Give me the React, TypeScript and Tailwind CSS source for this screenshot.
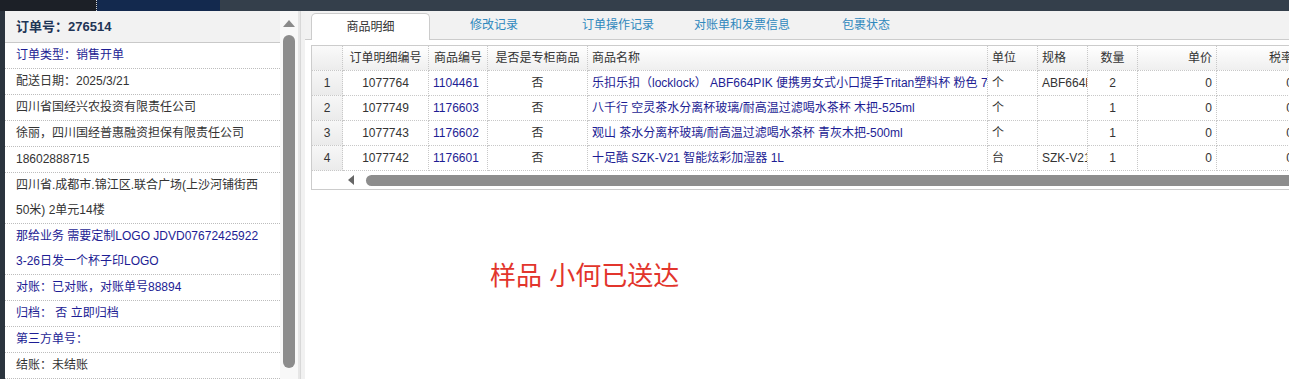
import React from "react";

const font = { fontFamily: '"Liberation Sans", "Noto Sans CJK SC", sans-serif' };

type InfoRow = { lines: string[]; blue?: boolean };

const infoRows: InfoRow[] = [
  { lines: ["订单类型：销售开单"], blue: true },
  { lines: ["配送日期：2025/3/21"] },
  { lines: ["四川省国经兴农投资有限责任公司"] },
  { lines: ["徐丽，四川国经普惠融资担保有限责任公司"] },
  { lines: ["18602888715"] },
  { lines: ["四川省.成都市.锦江区.联合广场(上沙河铺街西", "50米) 2单元14楼"] },
  { lines: ["那给业务 需要定制LOGO JDVD07672425922", "3-26日发一个杯子印LOGO"], blue: true },
  { lines: ["对账：已对账，对账单号88894"], blue: true },
  { lines: ["归档： 否 立即归档"], blue: true },
  { lines: ["第三方单号："], blue: true },
  { lines: ["结账：未结账"] },
];

const tabs = ["商品明细", "修改记录", "订单操作记录", "对账单和发票信息", "包裹状态"];

const items = [
  { id: "1077764", code: "1104461", name: "乐扣乐扣（locklock） ABF664PIK 便携男女式小口提手Tritan塑料杯 粉色 700ml", unit: "个", spec: "ABF664PIK", qty: "2" },
  { id: "1077749", code: "1176603", name: "八千行 空灵茶水分离杯玻璃/耐高温过滤喝水茶杯 木把-525ml", unit: "个", spec: "", qty: "1" },
  { id: "1077743", code: "1176602", name: "观山 茶水分离杯玻璃/耐高温过滤喝水茶杯 青灰木把-500ml", unit: "个", spec: "", qty: "1" },
  { id: "1077742", code: "1176601", name: "十足酷 SZK-V21 智能炫彩加湿器 1L", unit: "台", spec: "SZK-V21", qty: "1" },
];

const cols = "grid grid-cols-[31px_86px_59px_100px_400px_50px_50px_50px_79px_81px] w-max";
const cell = "h-[25px] leading-[24px] border-r border-b border-dotted border-[#c8c8c8] px-[4px] overflow-hidden whitespace-nowrap";
const head = `${cell} bg-gradient-to-b from-white to-[#efefef]`;

function LeftPanel() {
  return (
    <div className="w-[275px] bg-white flex flex-col">
      <div className="h-[32px] bg-[#f2f2f2] border-b border-[#c9c9c9] pl-[11px] flex items-center text-[13px] font-bold text-[#1f3556]">
        订单号：276514
      </div>
      {infoRows.map((r, i) => (
        <div
          key={i}
          className={`pl-[11px] border-b border-dotted border-[#bdbdbd] text-[12px] leading-[25px] ${r.blue ? "text-[#1d1d94]" : "text-[#333]"}`}
        >
          {r.lines.map((l, j) => (
            <div key={j} className="whitespace-nowrap">{l}</div>
          ))}
        </div>
      ))}
    </div>
  );
}

function LeftScrollbar() {
  return (
    <div className="w-[18px] bg-[#f8f8f8] flex flex-col items-center pt-[9px]">
      <svg width="12" height="7" viewBox="0 0 12 7">
        <polygon points="6,0 12,7 0,7" fill="#8a8a8a" />
      </svg>
      <div className="mt-[8px] w-[12px] h-[333px] rounded-full bg-[#8c8c8c]" />
    </div>
  );
}

function Table() {
  return (
    <div className="ml-[6px] mt-[5px] border border-[#cccccc] border-r-0 text-[12px] text-[#333]">
      <div className={cols}>
        <div className={`${cell} bg-gradient-to-b from-[#fafafa] to-[#ececec]`} />
        <div className={`${head} text-center`}>订单明细编号</div>
        <div className={`${head} text-center`}>商品编号</div>
        <div className={`${head} text-center`}>是否是专柜商品</div>
        <div className={head}>商品名称</div>
        <div className={head}>单位</div>
        <div className={head}>规格</div>
        <div className={`${head} text-center`}>数量</div>
        <div className={`${head} text-right`}>单价</div>
        <div className={`${head} text-right`}>税率</div>
        {items.map((it, i) => (
          <React.Fragment key={it.id}>
            <div className={`${cell} text-center bg-gradient-to-b from-[#f7f7f7] to-[#ebebeb]`}>{i + 1}</div>
            <div className={`${cell} text-center`}>{it.id}</div>
            <div className={`${cell} text-[#1d1d94]`}>{it.code}</div>
            <div className={`${cell} text-center`}>否</div>
            <div className={`${cell} text-[#1d1d94]`}>{it.name}</div>
            <div className={cell}>{it.unit}</div>
            <div className={cell}>{it.spec}</div>
            <div className={`${cell} text-center`}>{it.qty}</div>
            <div className={`${cell} text-right`}>0</div>
            <div className={`${cell} text-right`}>0</div>
          </React.Fragment>
        ))}
      </div>
      <div className="h-[18px] flex items-center">
        <div className="w-[44px] flex justify-end pr-[2px]">
          <svg width="6" height="10" viewBox="0 0 6 10">
            <polygon points="0,5 6,0 6,10" fill="#666" />
          </svg>
        </div>
        <div className="ml-[10px] flex-1 h-[11px] rounded-l-full bg-[#8d8d8d]" />
      </div>
    </div>
  );
}

function RightPanel() {
  return (
    <div className="flex-1 min-w-0 bg-white overflow-hidden flex flex-col">
      <div className="h-[29px] bg-[#f2f2f2] border-b border-[#cccccc] flex items-end pl-[3px] text-[12px]">
        {tabs.map((t, i) =>
          i === 0 ? (
            <div key={t} className="w-[124px] pl-[3px] pr-[2px] -mb-px">
              <div className="h-[27px] bg-white border border-b-0 border-[#cccccc] rounded-t-[5px] flex items-center justify-center text-[#333]">
                {t}
              </div>
            </div>
          ) : (
            <div key={t} className="w-[124px] h-[28px] flex items-center justify-center text-[#2f88bd]">
              {t}
            </div>
          )
        )}
      </div>
      <Table />
      <div className="pl-[185px] pt-[71px] text-[26px] leading-[30px] text-[#e2352c] whitespace-nowrap">
        样品 小何已送达
      </div>
    </div>
  );
}

export default function App() {
  return (
    <div className="w-[1289px] h-[379px] overflow-hidden flex flex-col bg-white" style={font}>
      <div className="h-[11px] flex shrink-0">
        <div className="w-[97px] bg-[#1c2027] border-r border-dotted border-[#cfd6df]" />
        <div className="w-[123px] bg-[#13294e]" />
        <div className="flex-1 bg-[#343f4b]" />
      </div>
      <div className="flex flex-1 min-h-0">
        <div className="w-[5px] bg-[#2b343e]" />
        <LeftPanel />
        <LeftScrollbar />
        <div className="w-[2px] bg-[#e6e6e6]" />
        <div className="w-[5px] bg-[#f1f1f1] border-l border-[#d8d8d8]" />
        <RightPanel />
      </div>
    </div>
  );
}
